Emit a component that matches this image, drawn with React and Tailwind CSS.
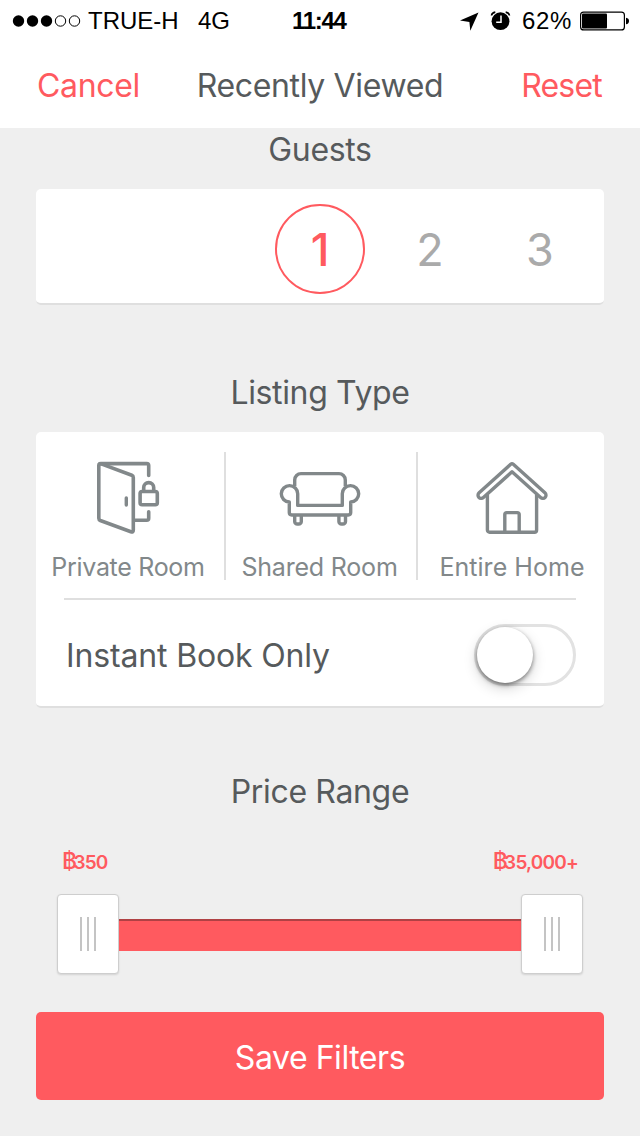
import { useState } from 'react';

const LISTING_TYPES = [
  { id: 'private', label: 'Private Room', Icon: DoorIcon, cell: 'w-[190px] pr-1', text: 'tracking-[-0.3px]' },
  { id: 'shared', label: 'Shared Room', Icon: SofaIcon, cell: 'w-[192px] pr-[3px]', text: 'tracking-[-0.2px]' },
  { id: 'entire', label: 'Entire Home', Icon: HouseIcon, cell: 'w-[186px] pl-[2px]', text: 'tracking-[0.05px]' },
];

function DoorIcon() {
  return (
    <svg
      className="h-[76px] w-[66px] shrink-0"
      viewBox="95 460 66 76"
      fill="none"
      stroke="currentColor"
      strokeWidth="3.6"
      strokeLinecap="round"
      strokeLinejoin="round"
    >
      <path d="M101 463.6h45.7a2 2 0 0 1 2 2v9.9" />
      <path d="M101.2 463.9l30.6 11.3q1.5.6 1.5 2.2v52.6q0 2.5-2.4 1.7l-30.6-11.2q-1.5-.6-1.5-2.2v-52.8q0-2.5 2.4-1.6z" />
      <path d="M134 520.3h12.7a2 2 0 0 0 2-2v-6.6" />
      <path d="M126.3 498v7" strokeWidth="3.4" />
      <rect x="140.1" y="491.5" width="17.2" height="13.2" rx="2" />
      <path d="M143.7 491v-3.4a5 5 0 0 1 10 0v3.4" />
    </svg>
  );
}

function SofaIcon() {
  return (
    <svg
      className="h-[76px] w-[82px] shrink-0"
      viewBox="279 460 82 76"
      fill="none"
      stroke="currentColor"
      strokeWidth="3.4"
      strokeLinejoin="round"
    >
      <path d="M294.7 486v-6.1a6.3 6.3 0 0 1 6.3-6.3h38a6.3 6.3 0 0 1 6.3 6.3v6.1" />
      <path d="M297.7 505.4h44.6v-11.6a8.2 8.2 0 1 1 8.4 8.2v10.6a2.4 2.4 0 0 1-2.4 2.4h-56.6a2.4 2.4 0 0 1-2.4-2.4V502a8.2 8.2 0 1 1 8.4-8.2z" />
      <path d="M294.7 515v6.4a2.6 2.6 0 0 0 2.6 2.6h1.4a2.6 2.6 0 0 0 2.6-2.6V515" />
      <path d="M338.9 515v6.4a2.6 2.6 0 0 0 2.6 2.6h1.4a2.6 2.6 0 0 0 2.6-2.6V515" />
    </svg>
  );
}

function HouseIcon() {
  return (
    <svg
      className="h-[76px] w-[74px] shrink-0"
      viewBox="475 460 74 76"
      fill="none"
      stroke="currentColor"
      strokeWidth="3.4"
      strokeLinejoin="round"
    >
      <path d="M510.7 464.2a2 2 0 0 1 2.6 0l31.6 28.6a3.2 3.2 0 0 1-4.3 4.8L512 471.8l-28.6 25.8a3.2 3.2 0 0 1-4.3-4.8z" />
      <path d="M487.4 495v35.1a2.2 2.2 0 0 0 2.2 2.2h44.8a2.2 2.2 0 0 0 2.2-2.2V495" />
      <path d="M504.8 532v-17.4a2 2 0 0 1 2-2h10.4a2 2 0 0 1 2 2V532" />
    </svg>
  );
}

function StatusBar() {
  return (
    <div className="grid h-10 grid-cols-[292px_1fr_181px] items-center pt-[2px] font-['Liberation_Sans',sans-serif] text-[24px] leading-none text-black">
      <div className="flex items-center pl-3">
        <svg className="h-3 w-[70px]" viewBox="12 14 70 12">
          {[18.5, 32.5, 46.5].map((cx) => (
            <circle key={cx} cx={cx} cy="20" r="5.7" />
          ))}
          {[60.5, 74.5].map((cx) => (
            <circle key={cx} cx={cx} cy="20" r="5.2" fill="none" stroke="black" />
          ))}
        </svg>
        <span className="ml-[6px] w-[91px] whitespace-nowrap">TRUE-H</span>
        <span className="ml-[19px]">4G</span>
      </div>
      <span className="font-bold tracking-[-1.3px]">11:44</span>
      <div className="flex items-center">
        {/* location, alarm */}
        <svg className="h-5 w-[54px]" viewBox="459 10 54 20">
          <path d="M478.5 11.5l-8.2 18.2-.9-8.8-9.4-1.4z" />
          <circle cx="500.5" cy="20.2" r="8.9" />
          <path d="M491.5 14.5q.3-2.8 3.8-3.4M509.5 14.5q-.3-2.8-3.8-3.4" fill="none" stroke="black" strokeWidth="1.6" />
          <path d="M501 14.5v6.7h-4.8" fill="none" stroke="white" strokeWidth="1.5" />
        </svg>
        <span className="ml-[9px] w-[50px] whitespace-nowrap tracking-[0.7px]">62%</span>
        <svg className="ml-2 h-5 w-[50px]" viewBox="580 10.5 50 20">
          <rect x="580.6" y="11.6" width="43.8" height="17.8" rx="3" fill="none" stroke="black" strokeWidth="1.2" />
          <rect x="582" y="13" width="25" height="15" rx="1" />
          <path d="M626 17.2q3 .5 3 3.3t-3 3.3z" />
        </svg>
      </div>
    </div>
  );
}

function SectionTitle({ children }) {
  return (
    <h2 className="text-center text-[32px] leading-10 tracking-[-0.35px] text-[#565a5c]">
      {children}
    </h2>
  );
}

function Handle() {
  return (
    <div className="flex h-20 w-[62px] shrink-0 items-center justify-center gap-[5px] rounded-[4px] border border-[#cecece] bg-white shadow-[0_1px_2px_rgba(0,0,0,0.12)]">
      <i className="h-[34px] w-[2px] bg-[#c4c4c4]" />
      <i className="h-[34px] w-[2px] bg-[#c4c4c4]" />
      <i className="h-[34px] w-[2px] bg-[#c4c4c4]" />
    </div>
  );
}

function Price({ children }) {
  return (
    <span className="whitespace-nowrap text-[19px] font-semibold leading-6 tracking-[-0.8px]">
      <span className="text-[23px] font-medium leading-6 tracking-[-3.7px]">฿</span>
      {children}
    </span>
  );
}

export default function App() {
  const [guests, setGuests] = useState(1);
  const [instant, setInstant] = useState(false);

  return (
    <div className="h-[1136px] w-[640px] overflow-hidden bg-[#efefef] font-['Inter',sans-serif]">
      <header className="h-32 bg-white">
        <StatusBar />
        <div className="grid h-[92px] grid-cols-[160px_1fr_160px] items-center text-[32px] leading-10 tracking-[-0.35px]">
          <button className="pl-[37px] text-left text-[#ff5a5f]">Cancel</button>
          <h1 className="whitespace-nowrap text-center text-[#565a5c]">Recently Viewed</h1>
          <button className="pr-[38px] text-right tracking-[-0.8px] text-[#ff5a5f]">Reset</button>
        </div>
      </header>

      <main className="px-9">
        <div className="pt-[2px]">
          <SectionTitle>Guests</SectionTitle>
        </div>
        <div className="mt-[19px] flex h-[116px] items-center justify-end gap-5 rounded-[5px] border-b-2 border-[#dfdfdf] bg-white pr-[19px] pt-[6px]">
          {[1, 2, 3].map((n) => (
            <button
              key={n}
              onClick={() => setGuests(n)}
              className={
                n === guests
                  ? 'size-[90px] rounded-full border-2 border-[#ff5a5f] pt-[2px] text-[45px] font-medium text-[#ff5a5f]'
                  : 'size-[90px] pt-[2px] text-[45px] text-[#aaaaaa]'
              }
            >
              {n}
            </button>
          ))}
        </div>

        <div className="mt-[68px]">
          <SectionTitle>Listing Type</SectionTitle>
        </div>
        <div className="mt-[19px] h-[276px] rounded-[5px] border-b-2 border-[#dfdfdf] bg-white pt-5">
          <div className="flex h-32 divide-x-2 divide-[#dfdfdf] text-[#82888a]">
            {LISTING_TYPES.map(({ id, label, Icon, cell, text }) => (
              <button key={id} className={`flex shrink-0 flex-col items-center pt-2 ${cell}`}>
                <Icon />
                <span className={`mt-[19px] whitespace-nowrap text-[25px] leading-6 ${text}`}>{label}</span>
              </button>
            ))}
          </div>
          <div className="mx-7 mt-[18px] flex h-[108px] items-center justify-between border-t-2 border-[#dfdfdf] pl-[2px] pt-1">
            <span className="pt-[2px] text-[32px] leading-10 tracking-[-0.15px] text-[#565a5c]">Instant Book Only</span>
            <button
              role="switch"
              aria-checked={instant}
              aria-label="Instant Book Only"
              onClick={() => setInstant(!instant)}
              className={`flex h-[62px] w-[102px] items-center rounded-full border-3 border-[#e2e2e2] ${instant ? 'justify-end bg-[#ff5a5f]' : 'bg-white'}`}
            >
              <span className="size-14 rounded-full bg-white shadow-[0_2px_4px_rgba(0,0,0,0.45),0_5px_14px_rgba(0,0,0,0.18)]" />
            </button>
          </div>
        </div>

        <div className="mt-16">
          <SectionTitle>Price Range</SectionTitle>
        </div>
        <div className="mt-[37px] flex h-6 justify-between px-[26px] text-[#ff5a5f]">
          <Price>350</Price>
          <Price>35,000+</Price>
        </div>
        <div className="mx-[21px] mt-[21px] flex items-center">
          <Handle />
          <div className="mt-[2px] h-8 flex-1 border-t-2 border-[#b04144] bg-[#ff5a5f]" />
          <Handle />
        </div>

        <button className="mt-[38px] h-[88px] w-full rounded-[5px] bg-[#ff5a5f] pt-[3px] text-[32px] tracking-[-0.45px] text-white">
          Save Filters
        </button>
      </main>
    </div>
  );
}
